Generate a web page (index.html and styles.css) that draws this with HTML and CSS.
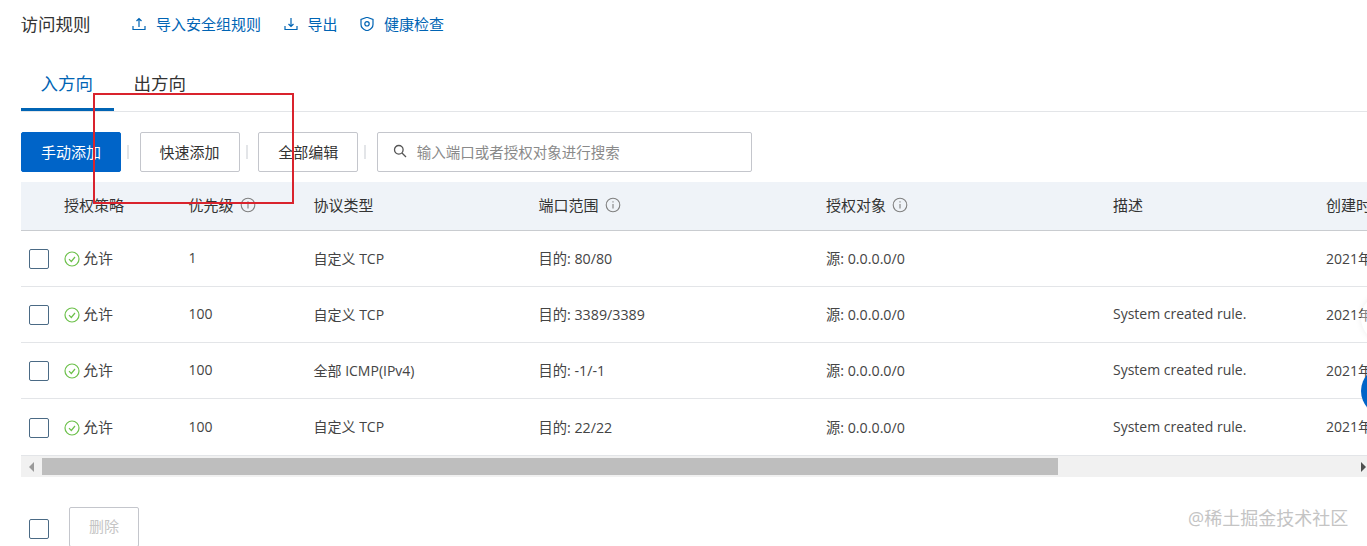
FILE: index.html
```html
<!DOCTYPE html>
<html lang="zh">
<head>
<meta charset="utf-8">
<title>访问规则</title>
<link rel="stylesheet" href="styles.css">
</head>
<body>
<main class="page">
  <header class="head">
    <h2 class="title">访问规则</h2>
    <a class="link link-first"><svg class="ico" viewBox="0 0 14 14"><path d="M1 9v3.5h12V9M7 10V1.500M4.500 4 7 1.500 9.500 4" /></svg>导入安全组规则</a>
    <a class="link"><svg class="ico" viewBox="0 0 14 14"><path d="M1 9v3.500h12V9M7 1v8.500M4.500 7 7 9.500 9.500 7" /></svg>导出</a>
    <a class="link"><svg class="ico" viewBox="0 0 14 14"><path d="M7 .3 13 2.500V7.500C13 10.700 9.700 12.900 7 13.800 4.300 12.900 1 10.700 1 7.500V2.500Z"/><circle cx="7" cy="6.800" r="2.200"/></svg>健康检查</a>
  </header>

  <nav class="tabs">
    <span class="tab tab-on">入方向</span>
    <span class="tab">出方向</span>
  </nav>

  <div class="tools">
    <button class="btn btn-primary">手动添加</button><i class="sep"></i>
    <button class="btn">快速添加</button><i class="sep"></i>
    <button class="btn">全部编辑</button><i class="sep"></i>
    <div class="search">
      <svg class="search-ico" viewBox="0 0 14 14"><circle cx="5.800" cy="5.800" r="4.300"/><path d="M9 9l4 4"/></svg>
      <span class="placeholder">输入端口或者授权对象进行搜索</span>
    </div>
  </div>

  <section class="table">
    <div class="row row-head">
      <span></span>
      <span>授权策略</span>
      <span>优先级<svg class="info" viewBox="0 0 16 16"><circle cx="8" cy="8" r="6.800"/><path d="M8 7v4.500M8 4.300v1.200"/></svg></span>
      <span>协议类型</span>
      <span>端口范围<svg class="info" viewBox="0 0 16 16"><circle cx="8" cy="8" r="6.800"/><path d="M8 7v4.500M8 4.300v1.200"/></svg></span>
      <span>授权对象<svg class="info" viewBox="0 0 16 16"><circle cx="8" cy="8" r="6.800"/><path d="M8 7v4.500M8 4.300v1.200"/></svg></span>
      <span>描述</span>
      <span>创建时间</span>
    </div>
    <div class="row">
      <span><i class="check"></i></span>
      <span class="allow"><svg class="ok" viewBox="0 0 16 16"><circle cx="8" cy="8" r="7"/><path d="M5 8.200 7.300 10.500 11 6"/></svg>允许</span>
      <span>1</span><span>自定义 TCP</span><span>目的: 80/80</span><span>源: 0.0.0.0/0</span><span></span><span>2021年</span>
    </div>
    <div class="row">
      <span><i class="check"></i></span>
      <span class="allow"><svg class="ok" viewBox="0 0 16 16"><circle cx="8" cy="8" r="7"/><path d="M5 8.200 7.300 10.500 11 6"/></svg>允许</span>
      <span>100</span><span>自定义 TCP</span><span>目的: 3389/3389</span><span>源: 0.0.0.0/0</span><span>System created rule.</span><span>2021年</span>
    </div>
    <div class="row">
      <span><i class="check"></i></span>
      <span class="allow"><svg class="ok" viewBox="0 0 16 16"><circle cx="8" cy="8" r="7"/><path d="M5 8.200 7.300 10.500 11 6"/></svg>允许</span>
      <span>100</span><span>全部 ICMP(IPv4)</span><span>目的: -1/-1</span><span>源: 0.0.0.0/0</span><span>System created rule.</span><span>2021年</span>
    </div>
    <div class="row">
      <span><i class="check"></i></span>
      <span class="allow"><svg class="ok" viewBox="0 0 16 16"><circle cx="8" cy="8" r="7"/><path d="M5 8.200 7.300 10.500 11 6"/></svg>允许</span>
      <span>100</span><span>自定义 TCP</span><span>目的: 22/22</span><span>源: 0.0.0.0/0</span><span>System created rule.</span><span>2021年</span>
    </div>
    <div class="scrollbar">
      <i class="arrow arrow-left"></i>
      <i class="thumb"></i>
      <i class="arrow arrow-right"></i>
    </div>
  </section>

  <footer class="foot">
    <i class="check"></i>
    <button class="btn btn-off">删除</button>
  </footer>
</main>

<div class="redbox"></div>
<div class="float float-white"></div>
<div class="float float-blue"></div>
<div class="watermark">@稀土掘金技术社区</div>
</body>
</html>
```

FILE: styles.css
```css
* { box-sizing: border-box; }
html, body { margin: 0; height: 546px; overflow: hidden; background: #fff; }
body {
  width: 1367px;
  position: relative;
  font-family: "Open Sans", "Noto Sans CJK SC", sans-serif;
  font-size: 14px;
  color: #333;
}
.page { padding-left: 21px; height: 546px; overflow: hidden; }

.head { display: flex; align-items: center; height: 50px; padding-bottom: 3px; }
.title { margin: 0 0 0 -0.5px; font-size: 17.500px; font-weight: 400; color: #333; width: 70.500px; white-space: nowrap; }
.link { display: flex; align-items: center; color: #0064b4; font-size: 15px; white-space: nowrap; margin-left: 22.500px; }
.link-first { margin-left: 41px; }
.ico { width: 14px; height: 14px; margin-right: 10px; fill: none; stroke: #0064b4; stroke-width: 1.200; }

.tabs { display: flex; height: 62px; padding-top: 20px; border-bottom: 1px solid #e3e5e8; }
.tab { height: 41px; font-size: 17.500px; line-height: 26px; color: #333; white-space: nowrap; }
.tab-on { width: 93px; margin-right: 19.500px; padding-left: 19.500px; color: #0064b4; border-bottom: 3px solid #0064b4; }

.tools { display: flex; align-items: center; margin-top: 20px; height: 40px; }
.btn {
  width: 100px; height: 40px; padding: 0 0 2px; border: 1px solid #c4c6cc; border-radius: 2px;
  background: #fff; color: #333; font: 15px "Noto Sans CJK SC", sans-serif;
}
.btn-primary { background: #0064c8; border-color: #0064c8; color: #fff; }
.btn-off { width: 70px; padding-bottom: 3px; color: #c5c5c5; }
.sep { width: 2px; height: 14px; background: #e3e5e8; margin: 0 10.600px 0 6px; }
.search {
  width: 375px; height: 40px; border: 1px solid #c4c6cc; border-radius: 2px;
  display: flex; align-items: center; padding: 0 0 2px 15px;
}
.search-ico { width: 14px; height: 14px; margin-right: 10px; fill: none; stroke: #555; stroke-width: 1.300; }
.placeholder { color: #8a8a8a; font-size: 14.500px; white-space: nowrap; }

.table { margin-top: 10px; width: 1346px; }
.row {
  display: grid;
  grid-template-columns: 43px 124.500px 125px 225px 287.500px 287px 213px 80px;
  align-items: center;
  height: 56px;
  padding-bottom: 2px;
  border-bottom: 1px solid #e3e5e8;
  font-size: 14px;
  color: #444;
  white-space: nowrap;
}
.row:nth-child(5) { height: 57px; }
.row > span { display: flex; align-items: center; }
.row > span:nth-child(5), .row > span:nth-child(6) { font-size: 14.250px; }
.row-head {
  height: 49px;
  padding-bottom: 4px;
  background: #eff3f8;
  border-bottom-color: #c9ccd0;
  color: #333;
}
.row-head > span, .row-head > span:nth-child(5), .row-head > span:nth-child(6) { font-size: 15px; }
.check { display: block; width: 20px; height: 20px; margin: 3px 0 0 8px; border: 1px solid #4a6a85; border-radius: 2px; background: #fff; }
.ok { width: 16px; height: 16px; margin: 3px 3px 0 0; fill: none; stroke: #6cc04a; stroke-width: 1.200; }
.row .allow { font-size: 15px; }
.info { width: 16px; height: 16px; margin: 1px 0 0 6px; fill: none; stroke: #808080; stroke-width: 1.100; }

.scrollbar { display: flex; align-items: center; height: 21px; background: #f1f1f1; }
.thumb { display: block; width: 1016px; height: 17px; margin-left: 8px; background: #bebebe; }
.arrow { display: block; width: 0; height: 0; border-style: solid; border-width: 5px 0; border-color: transparent; }
.arrow-left { margin-left: 8px; border-right: 5px solid #9a9a9a; }
.arrow-right { margin-left: auto; margin-right: 1px; border-left: 5px solid #505050; }

.foot { display: flex; align-items: flex-start; padding-top: 30px; }
.foot .check { margin: 12px 0 0 8px; }
.foot .btn { margin-left: 20px; }

.redbox { position: absolute; left: 93px; top: 93px; width: 201px; height: 111px; border: 2px solid #d9232d; }
.float { position: absolute; border-radius: 50%; }
.float-white { left: 1361px; top: 293px; width: 50px; height: 50px; background: rgba(255,255,255,.35); box-shadow: 0 0 6px rgba(0,0,0,.08); }
.float-blue { left: 1361px; top: 366px; width: 50px; height: 50px; background: #0064c8; }
.watermark { position: absolute; left: 1188px; top: 504px; font-size: 18px; color: #c4c4c4; white-space: nowrap; }
```
